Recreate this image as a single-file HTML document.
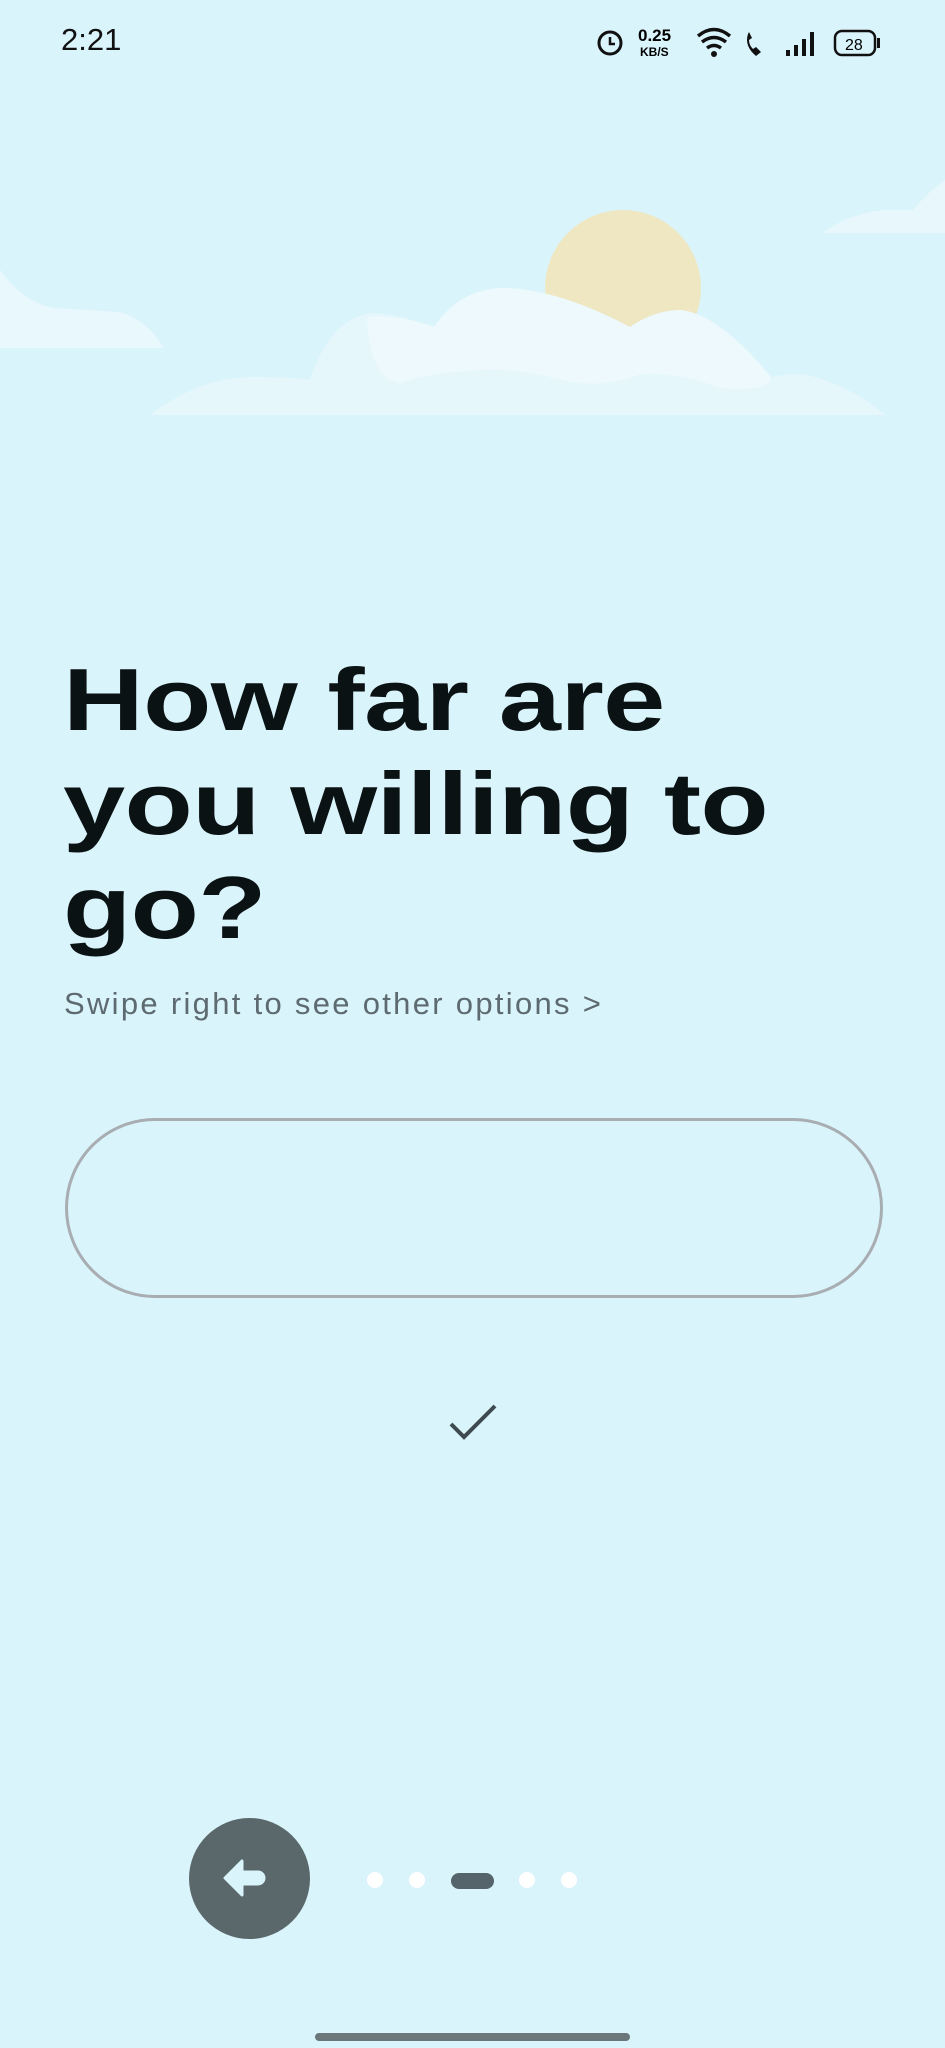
<!DOCTYPE html>
<html><head><meta charset="utf-8"><style>
html,body{margin:0;padding:0}
body{width:945px;height:2048px;background:#daf4fc;position:relative;overflow:hidden;font-family:"Liberation Sans",sans-serif}
.abs{position:absolute}
h1{position:absolute;left:63px;top:648px;margin:0;font-size:88px;line-height:104px;font-weight:bold;color:#0b1214;letter-spacing:-0.5px;transform:scaleX(1.27);transform-origin:0 0;white-space:nowrap}
.sub{left:64px;top:986px;font-size:31px;color:#5d6a6f;letter-spacing:2.3px}
</style></head><body>
<div class="abs" style="left:61px;top:22px;font-size:31px;color:#111">2:21</div>
<svg class="abs" style="left:590px;top:22px" width="300" height="40" viewBox="0 0 300 40">
<circle cx="20" cy="21" r="11" fill="none" stroke="#111" stroke-width="3"/><path d="M20 15v7h5" stroke="#111" stroke-width="2.5" fill="none"/>
<text x="48" y="19" font-size="17" font-weight="bold" font-family="Liberation Sans">0.25</text>
<text x="50" y="34" font-size="12" font-weight="bold" font-family="Liberation Sans">KB/S</text>
<path d="M108 14q16-13 32 0M112 20q12-9 24 0M117 26q7-5 14 0" stroke="#111" stroke-width="3.5" fill="none"/><circle cx="124" cy="32" r="3" fill="#111"/>
<path d="M158 12q-4 12 8 22l5-4-5-5-3 2q-4-4-4-9l3-2-3-6z" fill="#111"/>
<rect x="196" y="28" width="4" height="6" fill="#111"/><rect x="204" y="23" width="4" height="11" fill="#111"/><rect x="212" y="17" width="4" height="17" fill="#111"/><rect x="220" y="10" width="4" height="24" fill="#111"/>
<rect x="245" y="9" width="40" height="24" rx="7" fill="none" stroke="#111" stroke-width="2.5"/><rect x="287" y="16" width="3" height="10" fill="#111"/>
<text x="255" y="28" font-size="16" font-family="Liberation Sans">28</text>
</svg>
<svg class="abs" style="left:0;top:180px" width="945" height="260" viewBox="0 0 945 260">
<circle cx="623" cy="108" r="78" fill="#efe7c2"/>
<path d="M150 235 Q200 197 253 197 Q290 197 310 200 Q330 138 373 133 Q400 135 434 147 Q460 108 506 108 Q560 110 630 147 Q655 130 681 130 Q720 135 771 197 Q790 193 807 195 Q850 205 885 235 Z" fill="#e6f7fc"/>
<path d="M367 137 Q400 135 434 147 Q460 108 506 108 Q560 110 630 147 Q655 130 681 130 Q720 135 771 197 Q770 212 720 208 Q680 192 640 194 Q610 207 570 202 Q520 188 482 190 Q430 192 400 203 Q370 200 367 137Z" fill="#eef9fd"/>
<path d="M0 90 Q25 124 55 128 L120 132 Q150 142 163 168 L0 168Z" fill="#e9f8fc"/>
<path d="M822 53 Q850 33 885 30 Q905 30 913 30 Q928 12 945 0 L945 53Z" fill="#e7f7fc"/>
</svg>
<h1>How far are<br>you willing to<br>go?</h1>
<div class="abs sub">Swipe right to see other options &gt;</div>
<div class="abs" style="left:65px;top:1118px;width:812px;height:174px;border:3px solid #a8adb2;border-radius:90px;box-sizing:content-box"></div>
<svg class="abs" style="left:448px;top:1402px" width="50" height="42" viewBox="0 0 50 42"><path d="M3 22l13 13L47 4" stroke="#3d4a4f" stroke-width="4" fill="none"/></svg>
<div class="abs" style="left:189px;top:1818px;width:121px;height:121px;border-radius:50%;background:#5a676b"></div>
<svg class="abs" style="left:220px;top:1849px" width="60" height="60" viewBox="0 0 60 60"><path d="M5 29L22 12v11h16a6 6 0 010 12H22v11z" fill="#daf4fc" stroke="#daf4fc" stroke-width="3" stroke-linejoin="round"/></svg>
<div class="abs" style="left:367px;top:1872px;width:16px;height:16px;border-radius:50%;background:#fff"></div>
<div class="abs" style="left:409px;top:1872px;width:16px;height:16px;border-radius:50%;background:#fff"></div>
<div class="abs" style="left:451px;top:1873px;width:43px;height:16px;border-radius:8px;background:#55636a"></div>
<div class="abs" style="left:519px;top:1872px;width:16px;height:16px;border-radius:50%;background:#fff"></div>
<div class="abs" style="left:561px;top:1872px;width:16px;height:16px;border-radius:50%;background:#fff"></div>
<div class="abs" style="left:315px;top:2033px;width:315px;height:8px;border-radius:4px;background:#6c777b"></div>
</body></html>
